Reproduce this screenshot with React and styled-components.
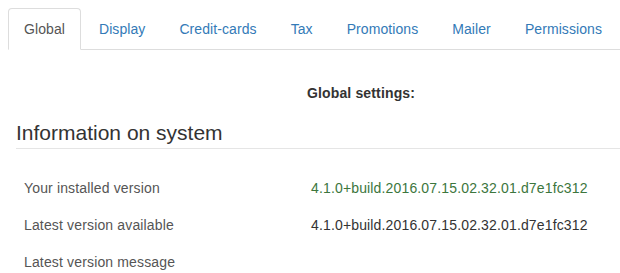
import { createGlobalStyle, styled } from "styled-components";

const GlobalStyle = createGlobalStyle`
  html, body {
    margin: 0;
    padding: 0;
    background: #fff;
    overflow: hidden;
  }
  body {
    font-family: "Liberation Sans", Arial, Helvetica, sans-serif;
    font-size: 14px;
    line-height: 20px;
    letter-spacing: 0.15px;
    color: #333;
  }
`;

const Page = styled.div`
  padding: 8px 0 0 8px;
`;

const Tabs = styled.ul`
  display: flex;
  list-style: none;
  margin: 0;
  padding: 0;
  border-bottom: 1px solid #ddd;
`;

const Tab = styled.li`
  margin: 0 2px -1px 0;
  padding: 10px 15px;
  border: 1px solid transparent;
  border-radius: 4px 4px 0 0;
  white-space: nowrap;
  letter-spacing: 0.08px;
  color: ${(p) => (p.$active ? "#555" : "#337ab7")};
  cursor: ${(p) => (p.$active ? "default" : "pointer")};

  ${(p) =>
    p.$active &&
    `
    background: #fff;
    border-color: #ddd;
    border-bottom-color: transparent;
  `}
`;

const Content = styled.div`
  padding: 33px 0 0 8px;
`;

const Caption = styled.div`
  margin-left: 86px;
  text-align: center;
  font-weight: 700;
  margin-bottom: 15px;
`;

const Legend = styled.h2`
  margin: 0 0 20px;
  font-size: 21px;
  font-weight: 400;
  line-height: 30px;
  letter-spacing: 0;
  color: #333;
  border-bottom: 1px solid #e5e5e5;
`;

const Table = styled.div`
  display: flex;
  flex-direction: column;
`;

const Row = styled.div`
  display: grid;
  grid-template-columns: 287px 1fr;
  border-top: 1px solid transparent;
`;

const Label = styled.div`
  padding: 8px;
  color: #555;
`;

const Value = styled.div`
  padding: 8px;
  white-space: nowrap;
  color: ${(p) => (p.$success ? "#3c763d" : "#333")};
`;

const tabs = [
  "Global",
  "Display",
  "Credit-cards",
  "Tax",
  "Promotions",
  "Mailer",
  "Permissions",
];

const rows = [
  { label: "Your installed version", value: "4.1.0+build.2016.07.15.02.32.01.d7e1fc312", success: true },
  { label: "Latest version available", value: "4.1.0+build.2016.07.15.02.32.01.d7e1fc312" },
  { label: "Latest version message", value: "" },
];

export default function App() {
  return (
    <>
      <GlobalStyle />
      <Page>
        <Tabs>
          {tabs.map((t, i) => (
            <Tab key={t} $active={i === 0}>
              {t}
            </Tab>
          ))}
        </Tabs>
        <Content>
          <Caption>Global settings:</Caption>
          <Legend>Information on system</Legend>
          <Table>
            {rows.map((r) => (
              <Row key={r.label}>
                <Label>{r.label}</Label>
                <Value $success={r.success}>{r.value}</Value>
              </Row>
            ))}
          </Table>
        </Content>
      </Page>
    </>
  );
}
